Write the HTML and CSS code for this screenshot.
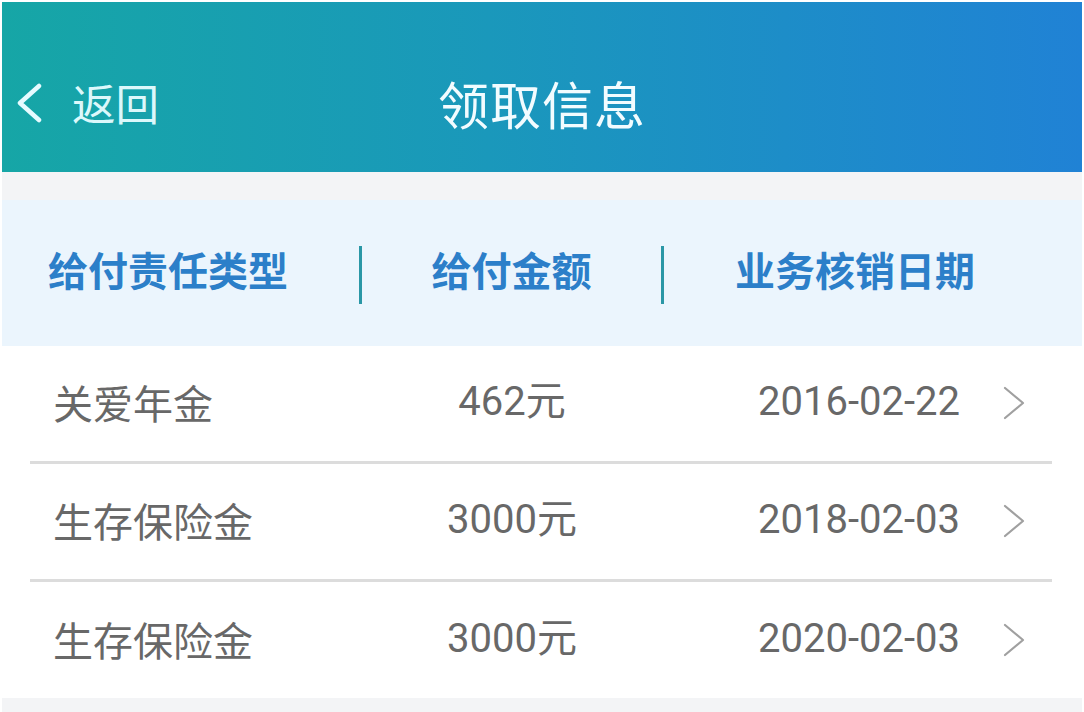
FILE: index.html
```html
<!DOCTYPE html>
<html lang="zh-CN">
<head>
<meta charset="utf-8">
<title>领取信息</title>
<link rel="stylesheet" href="styles.css">
</head>
<body>
<div class="page">
  <header class="nav">
    <div class="nav-left">
      <svg class="back-icon" width="30" height="40" viewBox="0 0 30 40">
        <polyline points="24,3 5,20 24,37" fill="none" stroke="#e6fbff" stroke-width="4.5" stroke-linecap="round" stroke-linejoin="round"/>
      </svg>
      <span class="back-text">返回</span>
    </div>
    <h1 class="nav-title">领取信息</h1>
    <div class="nav-right"></div>
  </header>
  <div class="gap"></div>
  <div class="thead">
    <div class="th th-type">给付责任类型</div>
    <span class="divider"></span>
    <div class="th th-amount">给付金额</div>
    <span class="divider"></span>
    <div class="th th-date">业务核销日期</div>
  </div>
  <div class="list">
    <div class="row">
      <div class="cell name">关爱年金</div>
      <div class="cell amount">462元</div>
      <div class="cell date">2016-02-22</div>
      <div class="cell arrow"><svg width="24" height="34" viewBox="0 0 24 34"><polyline points="3,2 21,17 3,32" fill="none" stroke="#a0a0a0" stroke-width="2.2" stroke-linecap="round" stroke-linejoin="round"/></svg></div>
    </div>
    <div class="row">
      <div class="cell name">生存保险金</div>
      <div class="cell amount">3000元</div>
      <div class="cell date">2018-02-03</div>
      <div class="cell arrow"><svg width="24" height="34" viewBox="0 0 24 34"><polyline points="3,2 21,17 3,32" fill="none" stroke="#a0a0a0" stroke-width="2.2" stroke-linecap="round" stroke-linejoin="round"/></svg></div>
    </div>
    <div class="row">
      <div class="cell name">生存保险金</div>
      <div class="cell amount">3000元</div>
      <div class="cell date">2020-02-03</div>
      <div class="cell arrow"><svg width="24" height="34" viewBox="0 0 24 34"><polyline points="3,2 21,17 3,32" fill="none" stroke="#a0a0a0" stroke-width="2.2" stroke-linecap="round" stroke-linejoin="round"/></svg></div>
    </div>
  </div>
  <div class="footer-gap"></div>
</div>
</body>
</html>
```

FILE: styles.css
```css
* { box-sizing: border-box; }
html, body { margin: 0; padding: 0; background: #ffffff; }
body {
  font-family: "Noto Sans CJK SC", "Noto Sans", sans-serif;
  width: 1084px;
  height: 712px;
  overflow: hidden;
}
.page {
  padding: 2px 2px 0 2px;
  display: flex;
  flex-direction: column;
  height: 712px;
}
.nav {
  height: 170px;
  background: linear-gradient(90deg, #16a6a6 0%, #1a98bb 45%, #2082d5 100%);
  display: grid;
  grid-template-columns: 1fr auto 1fr;
  align-items: center;
  padding-top: 32px;
}
.nav-left {
  display: flex;
  align-items: center;
  padding-left: 13px;
}
.back-icon { display: block; }
.back-text {
  margin-left: 27px;
  font-size: 43.5px;
  color: #dcf8fb;
  line-height: 1;
}
.nav-title {
  margin: 0;
  font-size: 51px;
  font-weight: 400;
  color: #f2fcff;
  line-height: 1;
  letter-spacing: 1px;
}
.gap {
  height: 28px;
  background: #f3f4f6;
}
.thead {
  height: 146px;
  background: #ebf5fd;
  display: flex;
  align-items: center;
  padding-top: 4px;
}
.th {
  font-size: 40px;
  font-weight: 700;
  color: #2c7fc9;
  line-height: 1;
  padding-bottom: 12px;
}
.th-type { width: 357px; padding-left: 46px; }
.th-amount { width: 299px; text-align: center; }
.th-date { flex: 1; text-align: center; padding-right: 36px; }
.divider {
  width: 3px;
  height: 58px;
  background: #2a97a6;
  flex: none;
}
.list {
  margin: 0 30px 0 28px;
}
.row {
  height: 118px;
  display: grid;
  grid-template-columns: 330px 304px 1fr 92px;
  align-items: center;
  border-bottom: 3px solid #dcdcdc;
  padding-bottom: 3px;
}
.row:last-child { border-bottom: none; height: 116px; }
.cell {
  font-size: 40px;
  color: #686868;
  line-height: 1;
}
.name { padding-left: 23px; }
.amount { text-align: center; font-family: Roboto, "Noto Sans CJK SC", sans-serif; }
.date { text-align: right; font-family: Roboto, sans-serif; }
.arrow { padding-left: 42px; display: flex; align-items: center; padding-top: 2px; }
.arrow svg { display: block; }
.footer-gap {
  flex: 1;
  background: #f3f4f6;
}
```
